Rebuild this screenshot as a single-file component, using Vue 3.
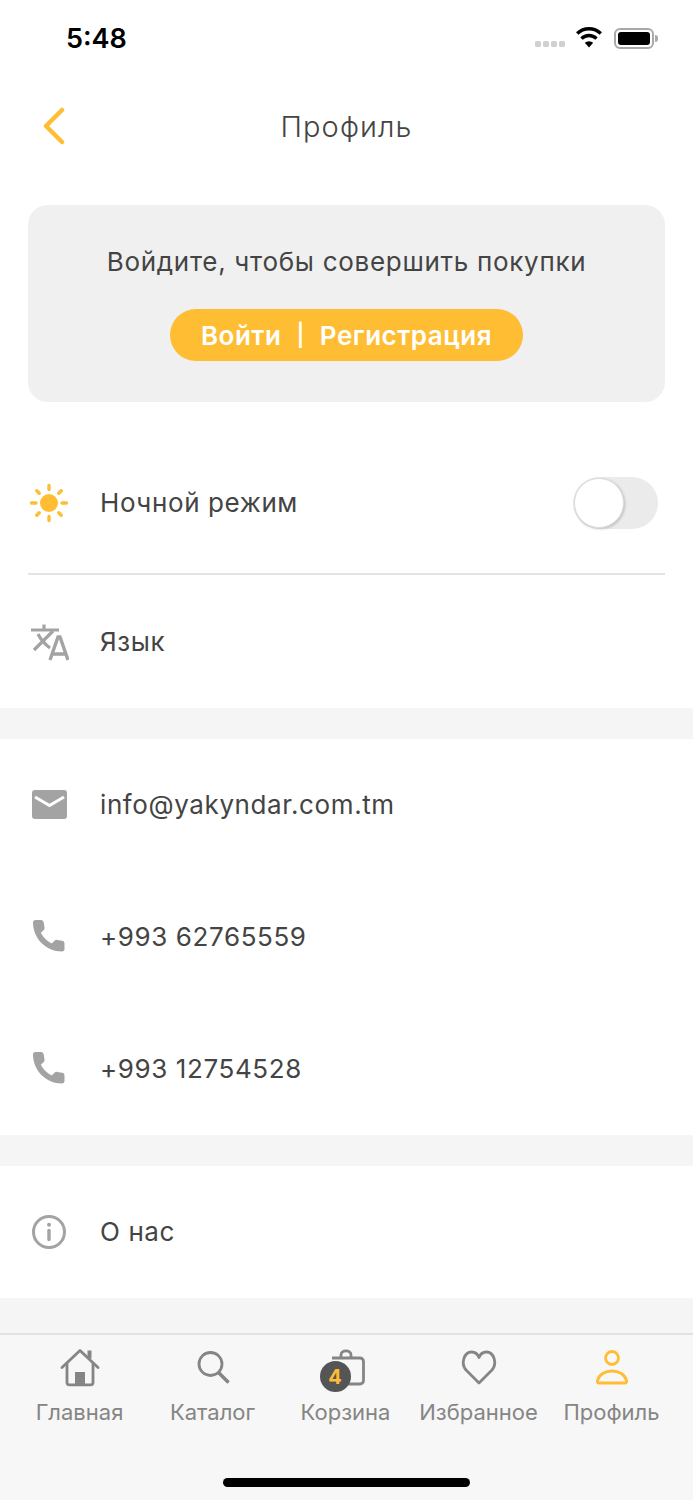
<script setup>
const contacts = [
  { icon: 'mail', text: 'info@yakyndar.com.tm' },
  { icon: 'phone', text: '+993 62765559' },
  { icon: 'phone', text: '+993 12754528' },
]
const tabs = [
  { icon: 'home', label: 'Главная' },
  { icon: 'search', label: 'Каталог' },
  { icon: 'cart', label: 'Корзина' },
  { icon: 'heart', label: 'Избранное' },
  { icon: 'user', label: 'Профиль', active: true },
]
</script>

<template>
  <div class="page">
    <div class="status">
      <span class="time">5:48</span>
      <div class="status-right">
        <div class="signal"><i></i><i></i><i></i><i></i></div>
        <svg class="wifi" width="28" height="22" viewBox="0 0 28 22">
          <path d="M14 21.500 9.800 16.800a6.200 6.200 0 0 1 8.400 0Z" fill="#000" />
          <path d="M6.500 12.600a10.800 10.800 0 0 1 15 0" fill="none" stroke="#000" stroke-width="3.400" />
          <path d="M2.200 7.400a17.200 17.200 0 0 1 23.600 0" fill="none" stroke="#000" stroke-width="3.400" />
        </svg>
        <div class="battery"><div class="battery-fill"></div></div>
        <div class="battery-cap"></div>
      </div>
    </div>

    <header class="header">
      <svg class="back" width="24" height="38" viewBox="0 0 24 38">
        <path d="M20 3 4 19l16 16" fill="none" stroke="#ffbd33" stroke-width="4.500" stroke-linecap="round" stroke-linejoin="round" />
      </svg>
      <h1 class="title">Профиль</h1>
    </header>

    <section class="card">
      <p class="card-text">Войдите, чтобы совершить покупки</p>
      <div class="login-btn"><span>Войти</span><span class="sep">|</span><span>Регистрация</span></div>
    </section>

    <section class="settings">
      <div class="row row-night">
        <svg class="icon" width="40" height="40" viewBox="0 0 40 40">
          <circle cx="20" cy="20" r="9" fill="#ffbd33" />
          <g stroke="#ffbd33" stroke-width="3.400" stroke-linecap="round">
            <path d="M20 2.500v4M20 33.500v4M2.500 20h4.500M33 20h4.500M7.800 7.800l2.400 2.400M29.800 29.800l2.400 2.400M7.800 32.200l2.400-2.400M29.800 10.200l2.400-2.400" />
          </g>
        </svg>
        <span class="label">Ночной режим</span>
        <div class="toggle"><div class="knob"></div></div>
      </div>
      <div class="divider"></div>
      <div class="row row-lang">
        <svg class="icon" width="40" height="40" viewBox="0 0 40 40" fill="none" stroke="#a3a3a3">
          <path d="M2 8h28M15 2.500V8" stroke-width="3.200" />
          <path d="M5 28 24 9M9 12c3 6 8 11 12 14" stroke-width="3.200" />
          <path d="M21 38 29 15h2l8 23M24 32h13" stroke-width="3.400" />
        </svg>
        <span class="label">Язык</span>
      </div>
    </section>

    <div class="band"></div>

    <section>
      <div v-for="c in contacts" :key="c.text" class="row">
        <svg v-if="c.icon === 'mail'" class="icon" width="40" height="40" viewBox="0 0 40 40">
          <rect x="3" y="5" width="35" height="29" rx="3" fill="#a3a3a3" />
          <path d="M6 12l14.500 8.500L35 12" fill="none" stroke="#fff" stroke-width="3" />
        </svg>
        <svg v-else class="icon" width="40" height="40" viewBox="0 0 40 40">
          <path d="M4 5.500C4 4 5 3 6.500 3h5.500c1.500 0 2.500 1 2.700 2.300l.8 5.200c.2 1-.1 2-.9 2.700l-2.800 2.600c2.300 4.700 6.300 8.500 11 10.800l2.700-2.800c.7-.8 1.700-1.100 2.700-.9l5 .9c1.300.2 2.300 1.200 2.300 2.600v5.600c0 1.500-1 2.500-2.500 2.500C17 34.500 4 21.500 4 5.500Z" fill="#a3a3a3" />
        </svg>
        <span class="label">{{ c.text }}</span>
      </div>
    </section>

    <div class="band"></div>

    <section>
      <div class="row">
        <svg class="icon" width="40" height="40" viewBox="0 0 40 40">
          <circle cx="20" cy="20" r="15.500" fill="none" stroke="#a3a3a3" stroke-width="3" />
          <circle cx="20" cy="12.800" r="2" fill="#a3a3a3" />
          <path d="M20 18.500v9" stroke="#a3a3a3" stroke-width="3.400" stroke-linecap="round" />
        </svg>
        <span class="label">О нас</span>
      </div>
    </section>

    <div class="band band-last"></div>

    <nav class="tabbar">
      <div class="tabs">
        <div v-for="t in tabs" :key="t.label" class="tab" :class="{ active: t.active }">
          <svg v-if="t.icon === 'home'" width="44" height="40" viewBox="0 0 44 40" fill="none" stroke="#858585" stroke-width="2.800" stroke-linejoin="round" stroke-linecap="round">
            <path d="M4 19.500 22 2.500l18 17" />
            <path d="M9 16v18.500c0 1.500.8 2.300 2.300 2.300h21.400c1.500 0 2.300-.8 2.300-2.300V16" />
            <rect x="17" y="24" width="10" height="12" fill="#858585" stroke="none" />
            <path d="M31.500 2.500v8" stroke-width="4" stroke-linecap="butt" />
          </svg>
          <svg v-else-if="t.icon === 'search'" width="44" height="40" viewBox="0 0 44 40" fill="none" stroke="#858585" stroke-linecap="round">
            <circle cx="19.500" cy="16" r="11.500" stroke-width="2.800" />
            <path d="M28.500 25.500l8 8" stroke-width="3.600" />
          </svg>
          <div v-else-if="t.icon === 'cart'" class="cart">
            <svg width="44" height="40" viewBox="0 0 44 40" fill="none" stroke="#858585" stroke-width="2.800">
              <path d="M8 10h28c2 0 3.500 1.500 3.500 3.500v19c0 2-1.500 3.500-3.500 3.500H12" stroke-linejoin="round" />
              <path d="M17 10V7c0-5.500 10-5.500 10 0v3" />
            </svg>
            <div class="badge">4</div>
          </div>
          <svg v-else-if="t.icon === 'heart'" width="44" height="40" viewBox="0 0 44 40" fill="none" stroke="#858585" stroke-width="2.800" stroke-linejoin="round">
            <path d="M22 35 9 22C3.500 15.500 7 4 14.500 4 18 4 20.700 6 22 9.500 23.300 6 26 4 29.500 4 37 4 40.500 15.500 35 22Z" />
          </svg>
          <svg v-else width="44" height="40" viewBox="0 0 44 40" fill="none" stroke="#ffbd33" stroke-width="2.800" stroke-linejoin="round">
            <circle cx="22" cy="10" r="6.500" />
            <path d="M9.500 35c-1.800 0-2.500-1-2-2.500C9 26.500 15 23 22 23s13 3.500 14.500 9.500c.5 1.500-.2 2.500-2 2.500Z" />
          </svg>
          <span class="tab-label">{{ t.label }}</span>
        </div>
      </div>
      <div class="home-indicator"></div>
    </nav>
  </div>
</template>

<style>
html, body { margin: 0; background: #fff; }
</style>

<style scoped>
.page {
  width: 693px;
  height: 1500px;
  overflow: hidden;
  background: #fff;
  display: flex;
  flex-direction: column;
  font-family: Inter, Roboto, sans-serif;
  color: #444;
}
.status {
  height: 76px;
  padding: 0 35px 0 66px;
  display: flex;
  align-items: center;
  justify-content: space-between;
  box-sizing: border-box;
}
.time {
  font-size: 27px;
  font-weight: 600;
  color: #000;
}
.status-right { display: flex; align-items: center; }
.signal { display: flex; gap: 2px; margin-right: 10px; margin-top: 12px; }
.signal i { width: 6px; height: 6px; border-radius: 1.500px; background: #d0d0d0; }
.wifi { margin-right: 11px; margin-top: -2px; }
.battery {
  width: 40px;
  height: 21px;
  border: 2px solid #a8a8a8;
  border-radius: 6px;
  padding: 2px;
  box-sizing: border-box;
}
.battery-fill { width: 100%; height: 100%; background: #000; border-radius: 3px; }
.battery-cap { width: 3px; height: 7px; margin-left: 1px; background: #a8a8a8; border-radius: 0 3px 3px 0; }
.header {
  height: 100px;
  position: relative;
  display: flex;
  align-items: center;
  justify-content: center;
}
.back { position: absolute; left: 42px; top: 31px; }
.title {
  margin: 0;
  font-size: 29px;
  font-weight: 300;
  letter-spacing: 1.100px;
  color: #444;
}
.card {
  margin: 29px 28px 0;
  height: 197px;
  background: #f0f0f0;
  border-radius: 20px;
  display: flex;
  flex-direction: column;
  align-items: center;
}
.card-text {
  margin: 39px 0 0;
  font-size: 26px;
  line-height: 36px;
  font-weight: 400;
  letter-spacing: 0.700px;
  color: #444;
}
.login-btn {
  margin-top: 29px;
  width: 353px;
  height: 52px;
  border-radius: 26px;
  background: #ffbd33;
  color: #fff;
  font-size: 26px;
  font-weight: 600;
  letter-spacing: 0.500px;
  display: flex;
  align-items: center;
  justify-content: center;
  white-space: nowrap;
}
.sep { margin: 0 15px; font-size: 22px; }
.settings { margin-top: 30px; }
.row {
  height: 132px;
  display: flex;
  align-items: center;
  padding: 0 35px 0 29px;
  box-sizing: border-box;
}
.row-night { height: 141px; }
.row-lang { height: 133px; }
.icon { flex: none; }
.label {
  margin-left: 31px;
  font-size: 26px;
  letter-spacing: 0.600px;
  line-height: 32px;
  color: #444;
}
.toggle {
  margin-left: auto;
  width: 85px;
  height: 52px;
  border-radius: 26px;
  background: #ebebeb;
  position: relative;
}
.knob {
  position: absolute;
  left: 1px;
  top: 1px;
  width: 48px;
  height: 48px;
  background: #fff;
  border: 1px solid #ddd;
  border-radius: 50%;
  box-shadow: 1px 1px 3px rgba(0, 0, 0, 0.2);
}
.divider { height: 2px; margin: 0 28px; background: #e4e4e4; }
.band { height: 31px; background: #f5f5f5; }
.band-last { height: 35px; }
.tabbar {
  flex: 1;
  background: #f7f7f7;
  border-top: 2px solid #e2e2e2;
  position: relative;
}
.tabs {
  display: grid;
  grid-template-columns: repeat(5, 133px);
  padding: 13px 13px 0;
}
.tab { display: flex; flex-direction: column; align-items: center; }
.tab svg { display: block; }
.tab-label {
  margin-top: 9px;
  font-size: 22px;
  line-height: 30px;
  color: #858585;
  white-space: nowrap;
}
.cart { position: relative; width: 44px; height: 40px; }
.badge {
  position: absolute;
  left: -4px;
  top: 13px;
  width: 31px;
  height: 31px;
  border-radius: 50%;
  background: #555;
  color: #ffbd33;
  font-size: 20px;
  font-weight: 700;
  display: flex;
  align-items: center;
  justify-content: center;
}
.home-indicator {
  position: absolute;
  left: 223px;
  bottom: 13px;
  width: 247px;
  height: 9px;
  border-radius: 5px;
  background: #000;
}
</style>
